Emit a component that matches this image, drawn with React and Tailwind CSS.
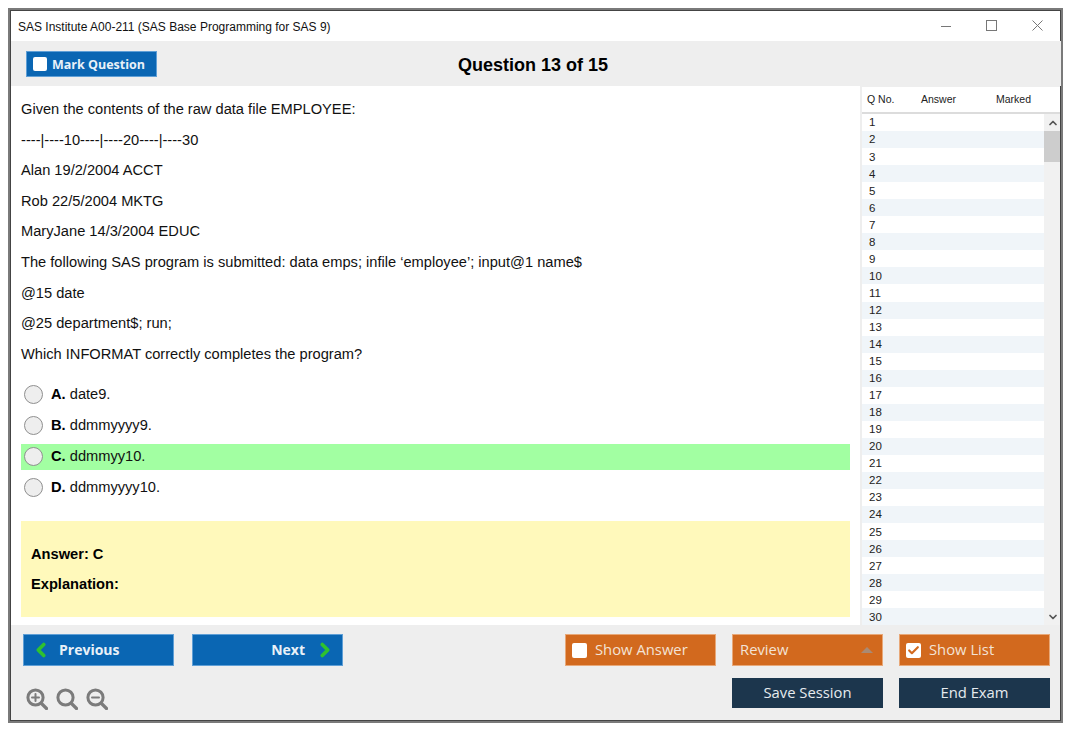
import { Check, ChevronLeft, ChevronRight, ChevronUp, ChevronDown } from 'lucide-react';

const lines = [
  'Given the contents of the raw data file EMPLOYEE:',
  '----|----10----|----20----|----30',
  'Alan 19/2/2004 ACCT',
  'Rob 22/5/2004 MKTG',
  'MaryJane 14/3/2004 EDUC',
  'The following SAS program is submitted: data emps; infile ‘employee’; input@1 name$',
  '@15 date',
  '@25 department$; run;',
  'Which INFORMAT correctly completes the program?',
];

const options = [
  { key: 'A.', text: 'date9.' },
  { key: 'B.', text: 'ddmmyyyy9.' },
  { key: 'C.', text: 'ddmmyy10.', correct: true },
  { key: 'D.', text: 'ddmmyyyy10.' },
];

const rows = Array.from({ length: 30 }, (_, i) => i + 1);

const ZoomIcon = ({ children }) => (
  <svg width="22" height="22" viewBox="0 0 22 22" fill="none" stroke="#7b7b7b" strokeWidth="3" strokeLinecap="round">
    <circle cx="9.5" cy="9.5" r="7.6" />
    <path d="M15.5 15.5 L20.5 20.5" strokeWidth="3.2" />
    {children}
  </svg>
);

const OrangeCheck = ({ checked }) => (
  <span className="flex h-[15px] w-[15px] items-center justify-center rounded-[2px] bg-white">
    {checked && <Check size={13} strokeWidth={4} className="text-[#d2691e]" />}
  </span>
);

export default function App() {
  return (
    <div className="h-[735px] w-[1075px] bg-white pl-2 pt-2 font-['Liberation_Sans',sans-serif]">
      <div className="flex h-[715px] w-[1055px] flex-col border-2 border-[#7a7a7a] outline outline-1 -outline-offset-3 outline-[#444]">
        {/* title bar */}
        <div className="ml-px flex h-[31px] shrink-0 items-center justify-between bg-white pl-[7px] pr-[18px] pt-[2px]">
          <span className="text-[12px] text-[#111]">SAS Institute A00-211 (SAS Base Programming for SAS 9)</span>
          <div className="mb-[2px] flex items-center gap-[35px]">
            <svg width="10" height="10" viewBox="0 0 10 10" stroke="#777" fill="none"><path d="M0 5.5 H10" /></svg>
            <svg width="11" height="11" viewBox="0 0 11 11" stroke="#777" fill="none"><rect x="0.5" y="0.5" width="10" height="10" /></svg>
            <svg width="11" height="11" viewBox="0 0 11 11" stroke="#777" fill="none"><path d="M0.5 0.5 L10.5 10.5 M10.5 0.5 L0.5 10.5" /></svg>
          </div>
        </div>

        {/* toolbar */}
        <div className="relative ml-px flex h-[45px] shrink-0 items-center justify-center bg-[#eeeeee] pr-[6px] pt-[4px]">
          <button className="absolute left-[15px] top-[10px] flex h-[26px] w-[131px] items-center gap-[5px] border border-[#5f9fd6] bg-[#0a66b3] pl-[6px] font-['Open_Sans',sans-serif] text-[12.5px] font-bold text-[#e9f1f8]">
            <span className="h-[14px] w-[14px] rounded-[2px] bg-white" />
            <span className="pt-[2px]">Mark Question</span>
          </button>
          <h1 className="text-[18px] font-bold text-black">Question 13 of 15</h1>
        </div>

        {/* main */}
        <div className="ml-px flex min-h-0 flex-1">
          <div className="w-[849px] shrink-0 bg-white pl-[10px] pr-[10px] pt-[15px]">
            <div className="text-[14.65px] leading-[17px] text-[#111]">
              {lines.map((line) => (
                <p key={line} className="mb-[13.6px]">{line}</p>
              ))}
            </div>
            <div className="mt-[19px] flex flex-col gap-[5px]">
              {options.map((o) => (
                <div
                  key={o.key}
                  className={`flex h-[26px] items-center gap-[8px] pl-[3px] text-[14.65px] text-[#111] ${o.correct ? 'bg-[#a2ffa2]' : ''}`}
                >
                  <span className="h-[19px] w-[19px] rounded-full border border-[#8f8f8f] bg-[#eeeeee]" />
                  <span><b className="text-black">{o.key}</b> {o.text}</span>
                </div>
              ))}
            </div>
            <div className="mt-[20px] h-[96px] bg-[#fff9bb] pl-[10px] pt-[25px] text-[14.65px] font-bold leading-[17px] text-black">
              <p className="mb-[13px]">Answer: C</p>
              <p>Explanation:</p>
            </div>
          </div>

          {/* question list */}
          <div className="flex min-w-0 flex-1 flex-col border-l-2 border-t border-[#eeeeee] bg-white">
            <div className="flex h-[27px] shrink-0 items-center border-b-2 border-[#dcdcdc] pl-[5px] text-[10.5px] text-[#222]">
              <span className="w-[54px]">Q No.</span>
              <span className="w-[75px]">Answer</span>
              <span>Marked</span>
            </div>
            <div className="flex min-h-0 flex-1">
              <div className="min-w-0 flex-1 overflow-hidden">
                {rows.map((n) => (
                  <div key={n} className={`flex h-[17.05px] shrink-0 items-center pl-[7px] pt-px text-[11.5px] text-[#222] ${n % 2 === 0 ? 'bg-[#f0f5f9]' : ''}`}>
                    {n}
                  </div>
                ))}
              </div>
              <div className="flex w-[17px] shrink-0 flex-col bg-[#f1f1f1]">
                <div className="flex h-[17px] items-center justify-center"><ChevronUp size={12} strokeWidth={3.5} className="text-[#555]" /></div>
                <div className="h-[31px] bg-[#cdcdcd]" />
                <div className="flex-1" />
                <div className="flex h-[17px] items-center justify-center"><ChevronDown size={12} strokeWidth={3.5} className="text-[#555]" /></div>
              </div>
            </div>
          </div>
        </div>

        {/* footer */}
        <div className="ml-px flex h-[96px] shrink-0 justify-between bg-[#eeeeee] pl-[12px] pr-[11px] pt-[9px] font-['Open_Sans',sans-serif]">
          <div>
            <div className="flex gap-[18px]">
              <button className="flex h-[32px] w-[151px] items-center gap-[7px] border border-[#5f9fd6] bg-[#0a66b3] pb-px pl-[6px] text-[14px] font-bold text-[#e9f1f8]">
                <ChevronLeft size={22} strokeWidth={4} className="text-[#2fc22f]" />
                Previous
              </button>
              <button className="flex h-[32px] w-[151px] items-center justify-end gap-[9px] border border-[#5f9fd6] bg-[#0a66b3] pb-px pr-[6px] text-[14px] font-bold text-[#e9f1f8]">
                Next
                <ChevronRight size={22} strokeWidth={4} className="text-[#2fc22f]" />
              </button>
            </div>
            <div className="ml-[3px] mt-[22px] flex gap-[8px]">
              <ZoomIcon>
                <path d="M6 9.5 H13 M9.5 6 V13" strokeWidth="2" />
              </ZoomIcon>
              <ZoomIcon />
              <ZoomIcon>
                <path d="M6 9.5 H13" strokeWidth="2" />
              </ZoomIcon>
            </div>
          </div>
          <div className="grid grid-cols-[151px_151px_151px] grid-rows-[32px_30px] gap-x-[16px] gap-y-[12px] text-[14.8px] text-[#f3e3d6]">
            <button className="flex items-center gap-[8px] border border-[#e8a878] bg-[#d2691e] pl-[6px]">
              <OrangeCheck />
              <span className="pb-[2px]">Show Answer</span>
            </button>
            <button className="flex items-center justify-between border border-[#e8a878] bg-[#d2691e] pl-[7px] pr-[9px]">
              <span className="pb-[2px]">Review</span>
              <span className="h-0 w-0 border-x-[6px] border-b-[6px] border-x-transparent border-b-[#a98a74]" />
            </button>
            <button className="flex items-center gap-[8px] border border-[#e8a878] bg-[#d2691e] pl-[6px]">
              <OrangeCheck checked />
              <span className="pb-[2px]">Show List</span>
            </button>
            <span />
            <button className="bg-[#1c364d] pb-px text-[#e6ebef]">Save Session</button>
            <button className="bg-[#1c364d] pb-px text-[#e6ebef]">End Exam</button>
          </div>
        </div>
      </div>
    </div>
  );
}
